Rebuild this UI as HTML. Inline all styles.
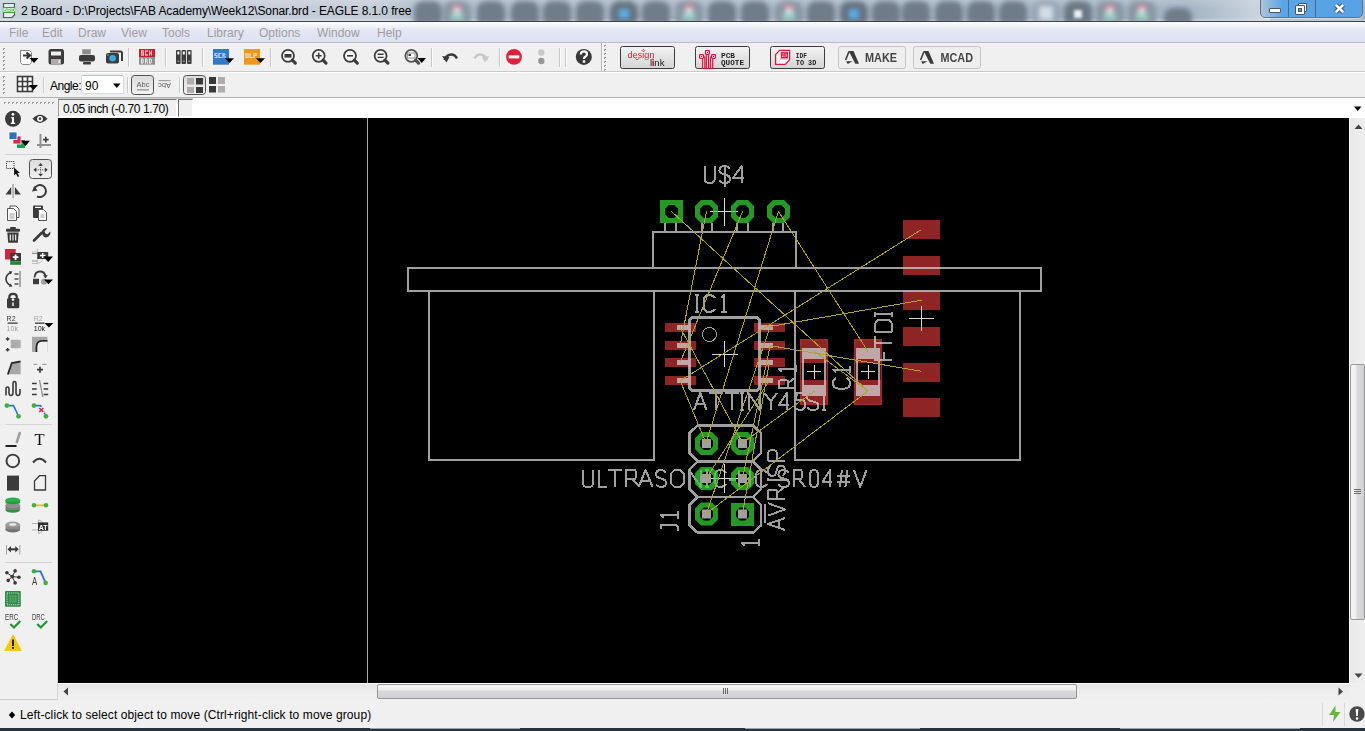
<!DOCTYPE html><html><head><meta charset="utf-8"><style>
*{box-sizing:border-box;margin:0;padding:0}
html,body{width:1365px;height:731px;overflow:hidden;background:#f0f0f0;font-family:"Liberation Sans",sans-serif;position:relative}
.a{position:absolute}
.t{position:absolute;white-space:nowrap;font-size:12px;line-height:14px}
svg{position:absolute}
</style></head><body><div class="a" style="left:0;top:0;width:1365px;height:21px;background:linear-gradient(90deg,#c9d2db 0,#c3ccd6 380px,#a9b8c7 430px,#a3b3c3 100%);overflow:hidden"><div class="a" style="left:0;top:0;width:1365px;height:21px;background:linear-gradient(rgba(255,255,255,.18),rgba(255,255,255,0) 40%,rgba(0,0,0,0) 85%,rgba(230,236,242,.5))"></div><div class="a" style="left:414px;top:1px;width:28px;height:24px;border-radius:9px 9px 3px 3px;background:#5a6673;filter:blur(2.6px);opacity:.72"></div><div class="a" style="left:443px;top:1px;width:28px;height:24px;border-radius:9px 9px 3px 3px;background:#7d8a96;filter:blur(2.6px);opacity:.72"></div><div class="a" style="left:452px;top:5px;width:10px;height:6px;background:#e890a0;filter:blur(2.5px);opacity:.8"></div><div class="a" style="left:451px;top:12px;width:12px;height:8px;background:#a0e0d0;filter:blur(2.5px);opacity:.8"></div><div class="a" style="left:454px;top:8px;width:6px;height:6px;background:#f0f4f8;filter:blur(2px);opacity:.7"></div><div class="a" style="left:477px;top:1px;width:28px;height:24px;border-radius:9px 9px 3px 3px;background:#5a6673;filter:blur(2.6px);opacity:.72"></div><div class="a" style="left:511px;top:1px;width:28px;height:24px;border-radius:9px 9px 3px 3px;background:#5a6673;filter:blur(2.6px);opacity:.72"></div><div class="a" style="left:543px;top:1px;width:28px;height:24px;border-radius:9px 9px 3px 3px;background:#5a6673;filter:blur(2.6px);opacity:.72"></div><div class="a" style="left:576px;top:1px;width:28px;height:24px;border-radius:9px 9px 3px 3px;background:#5a6673;filter:blur(2.6px);opacity:.72"></div><div class="a" style="left:610px;top:1px;width:28px;height:24px;border-radius:9px 9px 3px 3px;background:#4e5a66;filter:blur(2.6px);opacity:.72"></div><div class="a" style="left:619px;top:9px;width:10px;height:10px;background:#58b0ec;filter:blur(2.2px);opacity:.9"></div><div class="a" style="left:642px;top:1px;width:28px;height:24px;border-radius:9px 9px 3px 3px;background:#5a6673;filter:blur(2.6px);opacity:.72"></div><div class="a" style="left:675px;top:1px;width:28px;height:24px;border-radius:9px 9px 3px 3px;background:#7d8a96;filter:blur(2.6px);opacity:.72"></div><div class="a" style="left:684px;top:5px;width:10px;height:6px;background:#e890a0;filter:blur(2.5px);opacity:.8"></div><div class="a" style="left:683px;top:12px;width:12px;height:8px;background:#a0e0d0;filter:blur(2.5px);opacity:.8"></div><div class="a" style="left:686px;top:8px;width:6px;height:6px;background:#f0f4f8;filter:blur(2px);opacity:.7"></div><div class="a" style="left:708px;top:1px;width:28px;height:24px;border-radius:9px 9px 3px 3px;background:#5a6673;filter:blur(2.6px);opacity:.72"></div><div class="a" style="left:741px;top:1px;width:28px;height:24px;border-radius:9px 9px 3px 3px;background:#5a6673;filter:blur(2.6px);opacity:.72"></div><div class="a" style="left:775px;top:1px;width:28px;height:24px;border-radius:9px 9px 3px 3px;background:#7d8a96;filter:blur(2.6px);opacity:.72"></div><div class="a" style="left:784px;top:5px;width:10px;height:6px;background:#e890a0;filter:blur(2.5px);opacity:.8"></div><div class="a" style="left:783px;top:12px;width:12px;height:8px;background:#a0e0d0;filter:blur(2.5px);opacity:.8"></div><div class="a" style="left:786px;top:8px;width:6px;height:6px;background:#f0f4f8;filter:blur(2px);opacity:.7"></div><div class="a" style="left:807px;top:1px;width:28px;height:24px;border-radius:9px 9px 3px 3px;background:#5a6673;filter:blur(2.6px);opacity:.72"></div><div class="a" style="left:840px;top:1px;width:28px;height:24px;border-radius:9px 9px 3px 3px;background:#4e5a66;filter:blur(2.6px);opacity:.72"></div><div class="a" style="left:849px;top:9px;width:10px;height:10px;background:#58b0ec;filter:blur(2.2px);opacity:.9"></div><div class="a" style="left:872px;top:1px;width:28px;height:24px;border-radius:9px 9px 3px 3px;background:#5a6673;filter:blur(2.6px);opacity:.72"></div><div class="a" style="left:902px;top:1px;width:28px;height:24px;border-radius:9px 9px 3px 3px;background:#5a6673;filter:blur(2.6px);opacity:.72"></div><div class="a" style="left:935px;top:1px;width:28px;height:24px;border-radius:9px 9px 3px 3px;background:#5a6673;filter:blur(2.6px);opacity:.72"></div><div class="a" style="left:967px;top:1px;width:28px;height:24px;border-radius:9px 9px 3px 3px;background:#5a6673;filter:blur(2.6px);opacity:.72"></div><div class="a" style="left:999px;top:1px;width:28px;height:24px;border-radius:9px 9px 3px 3px;background:#5a6673;filter:blur(2.6px);opacity:.72"></div><div class="a" style="left:1032px;top:1px;width:28px;height:24px;border-radius:9px 9px 3px 3px;background:#8e9cab;filter:blur(2.6px);opacity:.72"></div><div class="a" style="left:1039px;top:6px;width:14px;height:14px;background:#e4ecf4;filter:blur(2.5px);opacity:.8"></div><div class="a" style="left:1064px;top:1px;width:28px;height:24px;border-radius:9px 9px 3px 3px;background:#56616c;filter:blur(2.6px);opacity:.72"></div><div class="a" style="left:1074px;top:10px;width:8px;height:8px;background:#e8eef4;filter:blur(1.5px)"></div><div class="a" style="left:1096px;top:1px;width:28px;height:24px;border-radius:9px 9px 3px 3px;background:#7d8a96;filter:blur(2.6px);opacity:.72"></div><div class="a" style="left:1105px;top:5px;width:10px;height:6px;background:#e890a0;filter:blur(2.5px);opacity:.8"></div><div class="a" style="left:1104px;top:12px;width:12px;height:8px;background:#a0e0d0;filter:blur(2.5px);opacity:.8"></div><div class="a" style="left:1107px;top:8px;width:6px;height:6px;background:#f0f4f8;filter:blur(2px);opacity:.7"></div><div class="a" style="left:1128px;top:1px;width:28px;height:24px;border-radius:9px 9px 3px 3px;background:#7d8a96;filter:blur(2.6px);opacity:.72"></div><div class="a" style="left:1137px;top:5px;width:10px;height:6px;background:#e890a0;filter:blur(2.5px);opacity:.8"></div><div class="a" style="left:1136px;top:12px;width:12px;height:8px;background:#a0e0d0;filter:blur(2.5px);opacity:.8"></div><div class="a" style="left:1139px;top:8px;width:6px;height:6px;background:#f0f4f8;filter:blur(2px);opacity:.7"></div><div class="a" style="left:1164px;top:8px;width:28px;height:24px;border-radius:9px 9px 3px 3px;background:#5a6673;filter:blur(2.6px);opacity:.72"></div><div class="a" style="left:1190px;top:0;width:80px;height:21px;background:linear-gradient(90deg,rgba(205,213,222,0),rgba(214,222,230,.9));"></div><div class="a" style="left:1260px;top:-3px;width:103px;height:21px;border:1px solid #5d7186;border-radius:0 0 5px 5px;background:linear-gradient(90deg,#aec4da 0,#5aa5e6 22px,#56a2e4 100%);box-shadow:0 1px 0 rgba(255,255,255,.5)"></div><div class="a" style="left:1288px;top:0;width:1px;height:17px;background:#4a6a8a"></div><div class="a" style="left:1315px;top:0;width:1px;height:17px;background:#4a6a8a"></div><div class="a" style="left:1269px;top:8px;width:12px;height:5px;background:#fafafa;border:1px solid #4a5560;border-radius:1px"></div><div class="a" style="left:1297.5px;top:2.5px;width:9.5px;height:9.5px;background:#fafafa;border:1px solid #4a5560;border-radius:1px"></div><div class="a" style="left:1295px;top:5px;width:9.5px;height:9.5px;background:#fafafa;border:1px solid #4a5560;border-radius:1px"></div><div class="a" style="left:1297.5px;top:7.5px;width:4px;height:4px;background:#4f9fe0;border:1px solid #4a5560"></div><svg style="left:1332px;top:2px" width="15" height="13"><path d="M3.8 2.8L11.2 10.2M11.2 2.8L3.8 10.2" stroke="#4a5560" stroke-width="4.6"/><path d="M3.8 2.8L11.2 10.2M11.2 2.8L3.8 10.2" stroke="#fafafa" stroke-width="2.6"/></svg><svg style="left:2px;top:2px" width="14" height="17"><path d="M1.5 1.5H12.5V13L10 15.5H1.5Z" fill="#e8ecef" stroke="#505860" stroke-width="1.2"/><rect x="1" y="5" width="12" height="6" fill="#3ca03c"/><text x="7" y="10" font-size="5.5" font-family="Liberation Sans" font-weight="bold" fill="#fff" text-anchor="middle">BRD</text></svg></div><div class="a" style="left:0;top:21px;width:1365px;height:1px;background:#3c4248"></div><div id="t_title" class="t" style="left:21px;top:4px;font-size:12px;line-height:14px;color:#000;letter-spacing:-0.1px">2 Board - D:\Projects\FAB Academy\Week12\Sonar.brd - EAGLE 8.1.0 free</div><div class="a" style="left:0;top:22px;width:1365px;height:21px;background:linear-gradient(#fdfdfe 0,#f3f5fa 3px,#e4e8f3 8px,#dde2f0 100%);border-bottom:1px solid #b8bfcc"></div><div id="t_mFile" class="t" style="left:9px;top:26px;font-size:12px;line-height:14px;color:#a29c9f;">File</div><div id="t_mEdit" class="t" style="left:42px;top:26px;font-size:12px;line-height:14px;color:#a29c9f;">Edit</div><div id="t_mDraw" class="t" style="left:78px;top:26px;font-size:12px;line-height:14px;color:#a29c9f;">Draw</div><div id="t_mView" class="t" style="left:121px;top:26px;font-size:12px;line-height:14px;color:#a29c9f;">View</div><div id="t_mTools" class="t" style="left:162px;top:26px;font-size:12px;line-height:14px;color:#a29c9f;">Tools</div><div id="t_mLibrary" class="t" style="left:207px;top:26px;font-size:12px;line-height:14px;color:#a29c9f;">Library</div><div id="t_mOptions" class="t" style="left:259px;top:26px;font-size:12px;line-height:14px;color:#a29c9f;">Options</div><div id="t_mWindow" class="t" style="left:317px;top:26px;font-size:12px;line-height:14px;color:#a29c9f;">Window</div><div id="t_mHelp" class="t" style="left:377px;top:26px;font-size:12px;line-height:14px;color:#a29c9f;">Help</div><div class="a" style="left:0;top:43px;width:1365px;height:28px;background:#f0f0f0"></div><div class="a" style="left:0;top:71px;width:1365px;height:1px;background:#c9c9c9"></div><div class="a" style="left:0;top:72px;width:1365px;height:1px;background:#fff"></div><div class="a" style="left:0;top:73px;width:1365px;height:24px;background:#f0f0f0"></div><div class="a" style="left:0;top:97px;width:1365px;height:1px;background:#b4b4b4"></div><div id="t_angle" class="t" style="left:50px;top:79px;font-size:12px;line-height:14px;color:#000;letter-spacing:-0.5px">Angle:</div><div class="a" style="left:81px;top:75px;width:43px;height:19px;background:#fff;border:1px solid #d4d8e0;border-top-color:#b8bcc4;border-radius:2px"></div><div id="t_ninety" class="t" style="left:85px;top:79px;font-size:12px;line-height:14px;color:#000;">90</div><svg style="left:112px;top:83px" width="10" height="6"><path d="M1 0.5H8.5L4.75 5Z" fill="#000"/></svg><div class="a" style="left:58px;top:98px;width:1307px;height:20px;background:#fff"></div><div class="a" style="left:58px;top:99px;width:119px;height:18px;background:#f0f0f0;border-top:1px solid #7a7a7a;border-left:1px solid #9a9a9a;border-right:1px solid #fff;border-bottom:1px solid #fff"></div><div class="a" style="left:178px;top:99px;width:15px;height:18px;background:#f0f0f0;border-top:1px solid #7a7a7a;border-left:1px solid #6a6a6a;border-right:1px solid #fff;border-bottom:1px solid #fff"></div><div class="a" style="left:58px;top:98px;width:135px;height:1px;background:#c8c8c8"></div><div id="t_coord" class="t" style="left:63px;top:102px;font-size:12px;line-height:14px;color:#000;letter-spacing:-0.4px">0.05 inch (-0.70 1.70)</div><svg style="left:1353px;top:106px" width="10" height="6"><path d="M1 0.5H8.5L4.75 5Z" fill="#000"/></svg><div class="a" style="left:0;top:98px;width:57px;height:601px;background:#f0f0f0"></div><div class="a" style="left:57px;top:118px;width:1px;height:582px;background:#d4d4d4"></div><div class="a" style="left:0;top:699px;width:58px;height:1px;background:#cfcfcf"></div><div class="a" style="left:5px;top:154px;width:47px;height:1px;background:#d4d4d4"></div><div class="a" style="left:5px;top:424px;width:47px;height:1px;background:#d4d4d4"></div><div class="a" style="left:5px;top:562px;width:47px;height:1px;background:#d4d4d4"></div><div class="a" style="left:58px;top:118px;width:1291px;height:565px;background:#000"></div><svg width="1365" height="731" style="left:0;top:0"><defs><clipPath id="cv"><rect x="58" y="118" width="1292" height="565"/></clipPath></defs><g clip-path="url(#cv)"><g fill="#8e2424"><rect x="903" y="220" width="37" height="19"/><rect x="903" y="256" width="37" height="19"/><rect x="903" y="291" width="37" height="19"/><rect x="903" y="327" width="37" height="19"/><rect x="903" y="363" width="37" height="19"/><rect x="903" y="398" width="37" height="19"/><rect x="665" y="323" width="31" height="9"/><rect x="754" y="323" width="31" height="9"/><rect x="665" y="341" width="31" height="9"/><rect x="754" y="341" width="31" height="9"/><rect x="665" y="358" width="31" height="9"/><rect x="754" y="358" width="31" height="9"/><rect x="665" y="376" width="31" height="9"/><rect x="754" y="376" width="31" height="9"/><rect x="800" y="339" width="28" height="24"/><rect x="800" y="380" width="28" height="25"/><rect x="800.75" y="339.75" width="26.5" height="64.5" fill="none" stroke="#a82828" stroke-width="1.5"/><rect x="854" y="339" width="28" height="24"/><rect x="854" y="380" width="28" height="25"/><rect x="854.75" y="339.75" width="26.5" height="64.5" fill="none" stroke="#a82828" stroke-width="1.5"/></g><g fill="#cecece" stroke="#cecece" opacity="0.775" shape-rendering="crispEdges"><path fill="none" stroke-width="2" d="M408 268H1041V291H408Z M429 291V460H654V291 M795 291V460H1020V291 M653 268V232H796V268"/><path fill="none" stroke-width="2" d="M665 223V231M676 223V231M701.5 223V231M712 223V231M737 223V231M747.5 223V231M772.5 223V231M783 223V231"/><rect x="689.5" y="317.5" width="70" height="73" rx="4" fill="none" stroke-width="3"/><rect x="677" y="325" width="14" height="5" stroke="none"/><rect x="758" y="325" width="15" height="5" stroke="none"/><rect x="677" y="343" width="14" height="5" stroke="none"/><rect x="758" y="343" width="15" height="5" stroke="none"/><rect x="677" y="360" width="14" height="5" stroke="none"/><rect x="758" y="360" width="15" height="5" stroke="none"/><rect x="677" y="378" width="14" height="5" stroke="none"/><rect x="758" y="378" width="15" height="5" stroke="none"/><path stroke="none" fill-rule="evenodd" d="M802 348H826V396H802Z M804 359H824V385H804Z"/><path stroke="none" fill-rule="evenodd" d="M856 348H880V396H856Z M858 359H878V385H858Z"/><path fill="none" stroke-width="2.5" d="M697.5 425.7H753L760.8 432.7V453L753 461.3L760.8 469.5V489L753 497L760.8 505V525.5L753 532.7H697.5L689.7 525.5V505L697.5 497L689.7 489V469.5L697.5 461.3L689.7 453V432.7Z M697.5 461.3H753 M697.5 497H753"/><circle cx="709.5" cy="334.5" r="7" fill="none" stroke-width="1"/><g fill="none" stroke-width="2" stroke-linejoin="round"><path transform="translate(704.8 166)" d="M0 0V12.5Q0 17 4.5 17H5.5Q10 17 10 12.5V0"/><path transform="translate(719.5 166)" d="M10.5 2.5Q8.4 0 5.25 0Q0 0 0 4.5Q0 7.5 5.25 8.5Q10.5 9.5 10.5 13Q10.5 17 5.25 17Q1.575 17 0 14.5M5.25 -1.5V21"/><path transform="translate(733 166)" d="M8.56 17V0L0 12H10.7"/><path transform="translate(695 295)" d="M0 0H4M2.0 0V17M0 17H4"/><path transform="translate(703.6 295)" d="M11.4 3Q9.120000000000001 0 5.7 0Q0 0 0 6V11Q0 17 5.7 17Q9.120000000000001 17 11.4 14"/><path transform="translate(721 295)" d="M0.0 3L3.0 0V17M0 17H6"/><path transform="translate(694 393)" d="M0 17L6.25 0L12.5 17M2.25 11H10.25"/><path transform="translate(708.5 393)" d="M0 0H14.5M7.25 0V17"/><path transform="translate(725 393)" d="M0 0H14M7.0 0V17"/><path transform="translate(739.8 393)" d="M0 0H4M2.0 0V17M0 17H4"/><path transform="translate(748.6 393)" d="M0 17V0L11 17V0"/><path transform="translate(764.6 393)" d="M0 0L6.2 8.5L12.4 0M6.2 8.5V17"/><path transform="translate(778.9 393)" d="M8.0 17V0L0 12H10"/><path transform="translate(796 393)" d="M9 0H0.9L0 7.5Q1.8 6.5 4.5 6.5Q9 6.5 9 11.5Q9 17 4.5 17Q0.9 17 0 15"/><path transform="translate(807 393)" d="M11.6 2.5Q9.28 0 5.8 0Q0 0 0 4.5Q0 7.5 5.8 8.5Q11.6 9.5 11.6 13Q11.6 17 5.8 17Q1.74 17 0 14.5"/><path transform="translate(821.7 393)" d="M0 0H4M2.0 0V17M0 17H4"/><path transform="translate(583 470)" d="M0 0V12.5Q0 17 4.5 17H5.5Q10 17 10 12.5V0"/><path transform="translate(598.5 470)" d="M0 0V17H8.5"/><path transform="translate(608 470)" d="M0 0H14M7.0 0V17"/><path transform="translate(625.5 470)" d="M0 17V0H8.99Q10.44 0 10.44 4.5Q10.44 9 8.99 9H0M6.525 9L14.5 17"/><path transform="translate(638.6 470)" d="M0 17L7.0 0L14 17M2.52 11H11.479999999999999"/><path transform="translate(656 470)" d="M10 2.5Q8.0 0 5.0 0Q0 0 0 4.5Q0 7.5 5.0 8.5Q10 9.5 10 13Q10 17 5.0 17Q1.5 17 0 14.5"/><path transform="translate(670.5 470)" d="M4 0H9.5L13.5 4V13L9.5 17H4L0 13V4Z"/><path transform="translate(689 470)" d="M0 17V0L12 17V0"/><path transform="translate(704.5 470)" d="M0 0H4M2.0 0V17M0 17H4"/><path transform="translate(715 470)" d="M11 3Q8.8 0 5.5 0Q0 0 0 6V11Q0 17 5.5 17Q8.8 17 11 14"/><path transform="translate(729 470)" d="M0 10H7"/><path transform="translate(739 470)" d="M0 0V17M11 0V17M0 8.5H11"/><path transform="translate(756 470)" d="M11 3Q8.8 0 5.5 0Q0 0 0 6V11Q0 17 5.5 17Q8.8 17 11 14"/><path transform="translate(769 470)" d="M0 10H7"/><path transform="translate(778.4 470)" d="M10.6 2.5Q8.48 0 5.3 0Q0 0 0 4.5Q0 7.5 5.3 8.5Q10.6 9.5 10.6 13Q10.6 17 5.3 17Q1.5899999999999999 17 0 14.5"/><path transform="translate(793.8 470)" d="M0 17V0H6.944Q8.064 0 8.064 4.5Q8.064 9 6.944 9H0M5.04 9L11.2 17"/><path transform="translate(810 470)" d="M4.0 0Q8 0 8 5V12Q8 17 4.0 17Q0 17 0 12V5Q0 0 4.0 0Z"/><path transform="translate(822.4 470)" d="M7.68 17V0L0 12H9.6"/><path transform="translate(837 470)" d="M4.826 0L2.794 17M10.413999999999998 0L8.382 17M0 5.5H12.7M0 11.5H12.7"/><path transform="translate(854 470)" d="M0 0L6.25 17L12.5 0"/><path transform="translate(779 388) rotate(-90)" d="M0 17V0H6.82Q7.92 0 7.92 4.5Q7.92 9 6.82 9H0M4.95 9L11 17"/><path transform="translate(779 372.4) rotate(-90)" d="M0.5 3L3.5 0V17M0 17H7"/><path transform="translate(833 388.6) rotate(-90)" d="M11 3Q8.8 0 5.5 0Q0 0 0 6V11Q0 17 5.5 17Q8.8 17 11 14"/><path transform="translate(833 373) rotate(-90)" d="M0.5 3L3.5 0V17M0 17H7"/><path transform="translate(875 359.8) rotate(-90)" d="M11 0H0V17M0 8.5H7.699999999999999"/><path transform="translate(875 349.8) rotate(-90)" d="M0 0H14M7.0 0V17"/><path transform="translate(875 331.6) rotate(-90)" d="M0 0V17H5.4Q12 17 12 11V6Q12 0 5.4 0Z"/><path transform="translate(875 316.7) rotate(-90)" d="M0 0H5M2.5 0V17M0 17H5"/><path transform="translate(768 530) rotate(-90)" d="M0 17L6.0 0L12 17M2.16 11H9.84"/><path transform="translate(768 515.6) rotate(-90)" d="M0 0L6.2 17L12.4 0"/><path transform="translate(768 498.8) rotate(-90)" d="M0 17V0H7.75Q9.0 0 9.0 4.5Q9.0 9 7.75 9H0M5.625 9L12.5 17"/><path transform="translate(768 481.4) rotate(-90)" d="M0 0H3M1.5 0V17M0 17H3"/><path transform="translate(768 476) rotate(-90)" d="M10.4 2.5Q8.32 0 5.2 0Q0 0 0 4.5Q0 7.5 5.2 8.5Q10.4 9.5 10.4 13Q10.4 17 5.2 17Q1.56 17 0 14.5"/><path transform="translate(768 460.5) rotate(-90)" d="M0 17V0H6.3Q10.5 0 10.5 4.5Q10.5 9 6.3 9H0"/><path transform="translate(661 531.5) rotate(-90)" d="M2.5 0H7V15L4.5 17H0.5"/><path transform="translate(661 519) rotate(-90)" d="M1.0 3L4.0 0V17M0 17H8"/><path transform="translate(741.6 546) rotate(-90)" d="M0.5 3L3.5 0V17M0 17H7"/></g><path d="M764.5 504V523" fill="none" stroke-width="2"/></g><rect x="367" y="118" width="1" height="565" fill="#a8a8a8"/><path d="M710 211.5H738M724 197.5V225.5M711.5 354H737.5M724.5 341V367M807 371.5H821M814 364.5V378.5M861 371.5H875M868 364.5V378.5M909.0 318.5H934.0M921.5 306.0V331.0M709.5 478.5H738.5M724 464.0V493.0" stroke="#d8d8d8" stroke-width="1" fill="none" shape-rendering="crispEdges"/><g fill="#32d432" opacity="0.725"><path fill-rule="evenodd" d="M660 200H683V223H660Z M668.8 205.0L674.2 205.0L678.0 208.8L678.0 214.2L674.2 218.0L668.8 218.0L665.0 214.2L665.0 208.8Z"/><path fill-rule="evenodd" d="M701.0 200.0L712.0 200.0L718.0 206.0L718.0 217.0L712.0 223.0L701.0 223.0L695.0 217.0L695.0 206.0Z M703.8 205.0L709.2 205.0L713.0 208.8L713.0 214.2L709.2 218.0L703.8 218.0L700.0 214.2L700.0 208.8Z"/><path fill-rule="evenodd" d="M737.0 200.0L748.0 200.0L754.0 206.0L754.0 217.0L748.0 223.0L737.0 223.0L731.0 217.0L731.0 206.0Z M739.8 205.0L745.2 205.0L749.0 208.8L749.0 214.2L745.2 218.0L739.8 218.0L736.0 214.2L736.0 208.8Z"/><path fill-rule="evenodd" d="M773.0 200.0L784.0 200.0L790.0 206.0L790.0 217.0L784.0 223.0L773.0 223.0L767.0 217.0L767.0 206.0Z M775.8 205.0L781.2 205.0L785.0 208.8L785.0 214.2L781.2 218.0L775.8 218.0L772.0 214.2L772.0 208.8Z"/><path fill-rule="evenodd" d="M701.0 432.0L712.0 432.0L718.0 438.0L718.0 449.0L712.0 455.0L701.0 455.0L695.0 449.0L695.0 438.0Z M703.8 437.0L709.2 437.0L713.0 440.8L713.0 446.2L709.2 450.0L703.8 450.0L700.0 446.2L700.0 440.8Z"/><path fill-rule="evenodd" d="M737.0 432.0L748.0 432.0L754.0 438.0L754.0 449.0L748.0 455.0L737.0 455.0L731.0 449.0L731.0 438.0Z M739.8 437.0L745.2 437.0L749.0 440.8L749.0 446.2L745.2 450.0L739.8 450.0L736.0 446.2L736.0 440.8Z"/><path fill-rule="evenodd" d="M701.0 467.0L712.0 467.0L718.0 473.0L718.0 484.0L712.0 490.0L701.0 490.0L695.0 484.0L695.0 473.0Z M703.8 472.0L709.2 472.0L713.0 475.8L713.0 481.2L709.2 485.0L703.8 485.0L700.0 481.2L700.0 475.8Z"/><path fill-rule="evenodd" d="M737.0 467.0L748.0 467.0L754.0 473.0L754.0 484.0L748.0 490.0L737.0 490.0L731.0 484.0L731.0 473.0Z M739.8 472.0L745.2 472.0L749.0 475.8L749.0 481.2L745.2 485.0L739.8 485.0L736.0 481.2L736.0 475.8Z"/><path fill-rule="evenodd" d="M701.0 502.5L712.0 502.5L718.0 508.5L718.0 519.5L712.0 525.5L701.0 525.5L695.0 519.5L695.0 508.5Z M703.8 507.5L709.2 507.5L713.0 511.3L713.0 516.7L709.2 520.5L703.8 520.5L700.0 516.7L700.0 511.3Z"/><path fill-rule="evenodd" d="M731 503H754V526H731Z M739.8 507.5L745.2 507.5L749.0 511.3L749.0 516.7L745.2 520.5L739.8 520.5L736.0 516.7L736.0 511.3Z"/></g><g fill="#a0a0a0"><rect x="702.0" y="439.0" width="9" height="9"/><rect x="738.0" y="439.0" width="9" height="9"/><rect x="702.0" y="474.0" width="9" height="9"/><rect x="738.0" y="474.0" width="9" height="9"/><rect x="702.0" y="509.5" width="9" height="9"/><rect x="738.0" y="509.5" width="9" height="9"/></g><path d="M671.5 211.5L868 391M706.5 211.5L680.2 345M742.5 211.5L680.2 362.3M778.5 211.5L868 351.5M778.5 211.5L706 443M680.2 380.7L921.5 229.5M680.2 327.5L742.5 443M680.2 380.7L706 443M921.5 300.2L770.2 326.5M921.5 371.3L770.2 345.6M814.5 351.4L868 391M814.5 391L742.5 443M868 391L706.5 513.5M770.2 326.5L706.5 513.5M769.2 380.7L706.5 478M770.2 345.6L742.5 478M769.2 363.2L742.5 513.5" stroke="#aca42c" stroke-width="1" fill="none" shape-rendering="crispEdges"/></g></svg><div class="a" style="left:58px;top:683px;width:1291px;height:16px;background:#fff"></div><div class="a" style="left:58px;top:684px;width:1291px;height:15px;background:linear-gradient(#e6e6e6,#ececec 40%,#efefef)"></div><div class="a" style="left:377px;top:684px;width:700px;height:15px;border:1px solid #979797;border-radius:2px;background:linear-gradient(#f6f6f6 0,#ececec 40%,#d9d9dc 45%,#d2d2d6 100%)"></div><svg style="left:722px;top:687px" width="8" height="8"><path d="M1.5 1V7M3.5 1V7M5.5 1V7" stroke="#6a6a6a" stroke-width="1"/></svg><svg style="left:63px;top:687px" width="6" height="9"><path d="M5 0.5V8.5L0.5 4.5Z" fill="#444"/></svg><svg style="left:1338px;top:687px" width="6" height="9"><path d="M0.5 0.5V8.5L5 4.5Z" fill="#444"/></svg><div class="a" style="left:1349px;top:118px;width:16px;height:565px;background:#fff"></div><div class="a" style="left:1350px;top:118px;width:15px;height:565px;background:linear-gradient(90deg,#e6e6e6,#ececec 40%,#efefef)"></div><div class="a" style="left:1350px;top:364px;width:15px;height:256px;border:1px solid #979797;border-radius:2px;background:linear-gradient(90deg,#f6f6f6 0,#ececec 40%,#d9d9dc 45%,#d2d2d6 100%)"></div><svg style="left:1353px;top:488px" width="9" height="8"><path d="M1 1.5H8M1 3.5H8M1 5.5H8" stroke="#6a6a6a" stroke-width="1"/></svg><svg style="left:1354px;top:124px" width="9" height="6"><path d="M0.5 5H8.5L4.5 0.5Z" fill="#444"/></svg><svg style="left:1354px;top:673px" width="9" height="6"><path d="M0.5 0.5H8.5L4.5 5Z" fill="#444"/></svg><div class="a" style="left:0;top:700px;width:1365px;height:28px;background:#f0f0f0"></div><svg style="left:8px;top:711px" width="8" height="8"><path d="M4 0.5L7.2 4L4 7.5L0.8 4Z" fill="#000"/></svg><div id="t_status" class="t" style="left:20px;top:708px;font-size:12px;line-height:14px;color:#000;letter-spacing:0.1px">Left-click to select object to move (Ctrl+right-click to move group)</div><div class="a" style="left:1322px;top:703px;width:1px;height:23px;background:#d8d8d8"></div><div class="a" style="left:1344px;top:703px;width:1px;height:23px;background:#d8d8d8"></div><svg style="left:1328px;top:705px" width="14" height="18"><path d="M7.5 0.5L1 10H6L5 17L12.5 7H7.5Z" fill="#6cb43c"/></svg><svg style="left:1349px;top:706px" width="16" height="17"><circle cx="8" cy="8" r="7.7" fill="#4a4a4a"/><path d="M6.7 3H9.3L8.8 10H7.2Z" fill="#fff"/><circle cx="8" cy="12.5" r="1.3" fill="#fff"/></svg><div class="a" style="left:0;top:728px;width:1365px;height:3px;background:#28323c"></div><div class="a" style="left:370px;top:728px;width:150px;height:1px;background:#9aa4ae"></div><div class="a" style="left:745px;top:728px;width:175px;height:1px;background:#9aa4ae"></div><div class="a" style="left:1120px;top:728px;width:180px;height:1px;background:#9aa4ae"></div><svg style="left:0;top:0;pointer-events:none" width="1365" height="731"><defs><linearGradient id="btng" x1="0" y1="0" x2="0" y2="1"><stop offset="0" stop-color="#f4f4f4"/><stop offset="1" stop-color="#d4d4d4"/></linearGradient><linearGradient id="btng2" x1="0" y1="0" x2="0" y2="1"><stop offset="0" stop-color="#dcdcdc"/><stop offset="1" stop-color="#f2f2f2"/></linearGradient></defs><rect x="3" y="48" width="2" height="2" fill="#a0a0a0"/><rect x="4" y="49" width="1" height="1" fill="#fff"/><rect x="3" y="52" width="2" height="2" fill="#a0a0a0"/><rect x="4" y="53" width="1" height="1" fill="#fff"/><rect x="3" y="56" width="2" height="2" fill="#a0a0a0"/><rect x="4" y="57" width="1" height="1" fill="#fff"/><rect x="3" y="60" width="2" height="2" fill="#a0a0a0"/><rect x="4" y="61" width="1" height="1" fill="#fff"/><rect x="3" y="64" width="2" height="2" fill="#a0a0a0"/><rect x="4" y="65" width="1" height="1" fill="#fff"/><rect x="3" y="68" width="2" height="2" fill="#a0a0a0"/><rect x="4" y="69" width="1" height="1" fill="#fff"/><path d="M20.5 50.5H29.5L31.5 52.5V62.5L29.5 64.5H22.5L20.5 62.5Z" fill="#fafafa" stroke="#858585" stroke-width="1"/><path d="M23 55.5H28.5M26.5 52.5L30 55.5L26.5 58.5" fill="none" stroke="#3a3a3a" stroke-width="2.2"/><path d="M29.5 58H38.5L34.0 63Z" fill="#000"/><rect x="48.5" y="49" width="15.5" height="15.5" rx="2.5" fill="#3c3c3c"/><rect x="51" y="51.5" width="10" height="4" fill="#f0f0f0"/><rect x="51" y="59" width="10" height="5.5" fill="#b0acab"/><rect x="58.5" y="60" width="1.5" height="3" fill="#f0f0f0"/><rect x="82" y="49" width="9" height="5.5" fill="#a8a8a8"/><rect x="83" y="50.5" width="7" height="1" fill="#707070"/><rect x="83" y="52.5" width="7" height="1" fill="#707070"/><rect x="79" y="55" width="16" height="6.5" rx="2" fill="#3c3c3c"/><rect x="83" y="62" width="8" height="2.5" rx="1" fill="#3c3c3c"/><path d="M110 51.5H120.5Q122 51.5 122 53V61" fill="none" stroke="#3c3c3c" stroke-width="2"/><rect x="106" y="53" width="13" height="10.5" rx="2" fill="#3c3c3c"/><circle cx="112.6" cy="58.2" r="3.3" fill="#3aa6e4"/><rect x="107.5" y="54.5" width="1" height="1" fill="#fff"/><rect x="128" y="48" width="1" height="19" fill="#c8c8c8"/><rect x="129" y="48" width="1" height="19" fill="#fafafa"/><rect x="139" y="49" width="16" height="8" fill="#c8202c"/><rect x="139" y="57" width="16" height="7.7" fill="#909090"/><g fill="#fff"><rect x="141" y="50.5" width="1" height="1"/><rect x="142" y="50.5" width="1" height="1"/><rect x="143" y="50.5" width="1" height="1"/><rect x="141" y="51.5" width="1" height="1"/><rect x="141" y="52.5" width="1" height="1"/><rect x="142" y="52.5" width="1" height="1"/><rect x="143" y="52.5" width="1" height="1"/><rect x="143" y="53.5" width="1" height="1"/><rect x="141" y="54.5" width="1" height="1"/><rect x="142" y="54.5" width="1" height="1"/><rect x="143" y="54.5" width="1" height="1"/><rect x="145" y="50.5" width="1" height="1"/><rect x="146" y="50.5" width="1" height="1"/><rect x="147" y="50.5" width="1" height="1"/><rect x="145" y="51.5" width="1" height="1"/><rect x="145" y="52.5" width="1" height="1"/><rect x="145" y="53.5" width="1" height="1"/><rect x="145" y="54.5" width="1" height="1"/><rect x="146" y="54.5" width="1" height="1"/><rect x="147" y="54.5" width="1" height="1"/><rect x="149" y="50.5" width="1" height="1"/><rect x="151" y="50.5" width="1" height="1"/><rect x="149" y="51.5" width="1" height="1"/><rect x="151" y="51.5" width="1" height="1"/><rect x="149" y="52.5" width="1" height="1"/><rect x="150" y="52.5" width="1" height="1"/><rect x="151" y="52.5" width="1" height="1"/><rect x="149" y="53.5" width="1" height="1"/><rect x="151" y="53.5" width="1" height="1"/><rect x="149" y="54.5" width="1" height="1"/><rect x="151" y="54.5" width="1" height="1"/></g><g fill="#fff"><rect x="141" y="58.5" width="1" height="1"/><rect x="142" y="58.5" width="1" height="1"/><rect x="141" y="59.5" width="1" height="1"/><rect x="143" y="59.5" width="1" height="1"/><rect x="141" y="60.5" width="1" height="1"/><rect x="142" y="60.5" width="1" height="1"/><rect x="141" y="61.5" width="1" height="1"/><rect x="143" y="61.5" width="1" height="1"/><rect x="141" y="62.5" width="1" height="1"/><rect x="142" y="62.5" width="1" height="1"/><rect x="145" y="58.5" width="1" height="1"/><rect x="146" y="58.5" width="1" height="1"/><rect x="145" y="59.5" width="1" height="1"/><rect x="147" y="59.5" width="1" height="1"/><rect x="145" y="60.5" width="1" height="1"/><rect x="146" y="60.5" width="1" height="1"/><rect x="145" y="61.5" width="1" height="1"/><rect x="147" y="61.5" width="1" height="1"/><rect x="145" y="62.5" width="1" height="1"/><rect x="147" y="62.5" width="1" height="1"/><rect x="149" y="58.5" width="1" height="1"/><rect x="150" y="58.5" width="1" height="1"/><rect x="149" y="59.5" width="1" height="1"/><rect x="151" y="59.5" width="1" height="1"/><rect x="149" y="60.5" width="1" height="1"/><rect x="151" y="60.5" width="1" height="1"/><rect x="149" y="61.5" width="1" height="1"/><rect x="151" y="61.5" width="1" height="1"/><rect x="149" y="62.5" width="1" height="1"/><rect x="150" y="62.5" width="1" height="1"/></g><rect x="165" y="48" width="1" height="19" fill="#c8c8c8"/><rect x="166" y="48" width="1" height="19" fill="#fafafa"/><rect x="176" y="50" width="4.6" height="14" rx="1" fill="#3c3c3c"/><rect x="177.3" y="51.5" width="2" height="3" fill="#fff"/><rect x="177.3" y="60.5" width="2" height="1.5" fill="#888"/><rect x="181.5" y="50" width="4.6" height="14" rx="1" fill="#3c3c3c"/><rect x="182.8" y="51.5" width="2" height="3" fill="#fff"/><rect x="182.8" y="60.5" width="2" height="1.5" fill="#888"/><rect x="187" y="50" width="4.6" height="14" rx="1" fill="#3c3c3c"/><rect x="188.3" y="51.5" width="2" height="3" fill="#fff"/><rect x="188.3" y="60.5" width="2" height="1.5" fill="#888"/><rect x="202" y="48" width="1" height="19" fill="#c8c8c8"/><rect x="203" y="48" width="1" height="19" fill="#fafafa"/><rect x="213" y="49" width="16" height="15.7" fill="#2f7bc8"/><g fill="#e8f0ff"><rect x="214.5" y="53" width="1" height="1"/><rect x="215.5" y="53" width="1" height="1"/><rect x="216.5" y="53" width="1" height="1"/><rect x="214.5" y="54" width="1" height="1"/><rect x="214.5" y="55" width="1" height="1"/><rect x="215.5" y="55" width="1" height="1"/><rect x="216.5" y="55" width="1" height="1"/><rect x="216.5" y="56" width="1" height="1"/><rect x="214.5" y="57" width="1" height="1"/><rect x="215.5" y="57" width="1" height="1"/><rect x="216.5" y="57" width="1" height="1"/><rect x="218.5" y="53" width="1" height="1"/><rect x="219.5" y="53" width="1" height="1"/><rect x="220.5" y="53" width="1" height="1"/><rect x="218.5" y="54" width="1" height="1"/><rect x="218.5" y="55" width="1" height="1"/><rect x="218.5" y="56" width="1" height="1"/><rect x="218.5" y="57" width="1" height="1"/><rect x="219.5" y="57" width="1" height="1"/><rect x="220.5" y="57" width="1" height="1"/><rect x="222.5" y="53" width="1" height="1"/><rect x="223.5" y="53" width="1" height="1"/><rect x="222.5" y="54" width="1" height="1"/><rect x="224.5" y="54" width="1" height="1"/><rect x="222.5" y="55" width="1" height="1"/><rect x="223.5" y="55" width="1" height="1"/><rect x="222.5" y="56" width="1" height="1"/><rect x="224.5" y="56" width="1" height="1"/><rect x="222.5" y="57" width="1" height="1"/><rect x="224.5" y="57" width="1" height="1"/></g><path d="M225 58.3H234L229.5 63.0Z" fill="#000"/><rect x="244" y="49" width="16" height="15.7" fill="#f0961e"/><g fill="#fff4e0"><rect x="245.5" y="53" width="1" height="1"/><rect x="247.5" y="53" width="1" height="1"/><rect x="245.5" y="54" width="1" height="1"/><rect x="247.5" y="54" width="1" height="1"/><rect x="245.5" y="55" width="1" height="1"/><rect x="247.5" y="55" width="1" height="1"/><rect x="245.5" y="56" width="1" height="1"/><rect x="247.5" y="56" width="1" height="1"/><rect x="245.5" y="57" width="1" height="1"/><rect x="246.5" y="57" width="1" height="1"/><rect x="247.5" y="57" width="1" height="1"/><rect x="249.5" y="53" width="1" height="1"/><rect x="249.5" y="54" width="1" height="1"/><rect x="249.5" y="55" width="1" height="1"/><rect x="249.5" y="56" width="1" height="1"/><rect x="249.5" y="57" width="1" height="1"/><rect x="250.5" y="57" width="1" height="1"/><rect x="251.5" y="57" width="1" height="1"/><rect x="253.5" y="53" width="1" height="1"/><rect x="254.5" y="53" width="1" height="1"/><rect x="255.5" y="53" width="1" height="1"/><rect x="253.5" y="54" width="1" height="1"/><rect x="255.5" y="54" width="1" height="1"/><rect x="253.5" y="55" width="1" height="1"/><rect x="254.5" y="55" width="1" height="1"/><rect x="255.5" y="55" width="1" height="1"/><rect x="253.5" y="56" width="1" height="1"/><rect x="253.5" y="57" width="1" height="1"/></g><path d="M256 58.3H265L260.5 63.0Z" fill="#000"/><rect x="270" y="48" width="1" height="19" fill="#c8c8c8"/><rect x="271" y="48" width="1" height="19" fill="#fafafa"/><circle cx="288" cy="55.8" r="6" fill="#f4f4f4" stroke="#3c3c3c" stroke-width="1.8"/><path d="M292.3 60.099999999999994L295.3 63.099999999999994" stroke="#3c3c3c" stroke-width="3.2" stroke-linecap="round"/><rect x="284.5" y="54" width="7" height="3.6" fill="#3c3c3c"/><circle cx="318.7" cy="55.8" r="6" fill="#f4f4f4" stroke="#3c3c3c" stroke-width="1.8"/><path d="M323.0 60.099999999999994L326.0 63.099999999999994" stroke="#3c3c3c" stroke-width="3.2" stroke-linecap="round"/><path d="M315.7 55.8H321.7M318.7 52.8V58.8" stroke="#3c3c3c" stroke-width="1.6"/><circle cx="350" cy="55.8" r="6" fill="#f4f4f4" stroke="#3c3c3c" stroke-width="1.8"/><path d="M354.3 60.099999999999994L357.3 63.099999999999994" stroke="#3c3c3c" stroke-width="3.2" stroke-linecap="round"/><path d="M347 55.8H353" stroke="#3c3c3c" stroke-width="1.6"/><circle cx="380.6" cy="55.8" r="6" fill="#f4f4f4" stroke="#3c3c3c" stroke-width="1.8"/><path d="M384.90000000000003 60.099999999999994L387.90000000000003 63.099999999999994" stroke="#3c3c3c" stroke-width="3.2" stroke-linecap="round"/><path d="M377.6 54.2H383.6M377.6 57.4H383.6" stroke="#3c3c3c" stroke-width="1.4"/><circle cx="411.3" cy="55.8" r="6" fill="#f4f4f4" stroke="#505050" stroke-width="1.8"/><path d="M415.6 60.099999999999994L418.6 63.099999999999994" stroke="#505050" stroke-width="3.2" stroke-linecap="round"/><rect x="407.5" y="53" width="7.5" height="5" fill="#fff" stroke="#909090" stroke-width="1"/><rect x="408.5" y="54" width="2.5" height="2" fill="#3c3c3c"/><path d="M417.5 58H426.0L421.75 63Z" fill="#000"/><rect x="431" y="48" width="1" height="19" fill="#c8c8c8"/><rect x="432" y="48" width="1" height="19" fill="#fafafa"/><path d="M444.5 60Q447 54 452 54.5Q455.5 55 457 58.5" fill="none" stroke="#3a3a3a" stroke-width="2.4"/><path d="M442 56L446.5 62.5L449.5 57Z" fill="#3a3a3a"/><path d="M487 60Q484.5 54 479.5 54.5Q476 55 474.5 58.5" fill="none" stroke="#c8c8c8" stroke-width="2.4"/><path d="M489.5 56L485 62.5L482 57Z" fill="#c8c8c8"/><rect x="499" y="48" width="1" height="19" fill="#c8c8c8"/><rect x="500" y="48" width="1" height="19" fill="#fafafa"/><circle cx="514" cy="56.9" r="7.9" fill="#e0203c"/><rect x="508.7" y="55.4" width="10.6" height="3" fill="#fff"/><circle cx="541.3" cy="52.5" r="3.2" fill="#c8c8c8"/><circle cx="541.3" cy="61" r="3.2" fill="#969696"/><rect x="559" y="48" width="1" height="19" fill="#c8c8c8"/><rect x="560" y="48" width="1" height="19" fill="#fafafa"/><rect x="565" y="48" width="1" height="19" fill="#c8c8c8"/><rect x="566" y="48" width="1" height="19" fill="#fafafa"/><circle cx="583.8" cy="56.9" r="8" fill="#383838"/><path d="M580.8 54.6Q580.8 51.4 584 51.4Q587 51.4 587 54.2Q587 55.8 585.2 56.8Q584 57.5 584 59" fill="none" stroke="#fff" stroke-width="2.2"/><rect x="582.8" y="60.3" width="2.4" height="2.4" fill="#fff"/><rect x="601" y="43" width="1" height="28" fill="#b4b4b4"/><rect x="602" y="43" width="1" height="28" fill="#fcfcfc"/><rect x="604" y="45" width="2" height="2" fill="#a0a0a0"/><rect x="605" y="46" width="1" height="1" fill="#fff"/><rect x="604" y="49" width="2" height="2" fill="#a0a0a0"/><rect x="605" y="50" width="1" height="1" fill="#fff"/><rect x="604" y="53" width="2" height="2" fill="#a0a0a0"/><rect x="605" y="54" width="1" height="1" fill="#fff"/><rect x="604" y="57" width="2" height="2" fill="#a0a0a0"/><rect x="605" y="58" width="1" height="1" fill="#fff"/><rect x="604" y="61" width="2" height="2" fill="#a0a0a0"/><rect x="605" y="62" width="1" height="1" fill="#fff"/><rect x="604" y="65" width="2" height="2" fill="#a0a0a0"/><rect x="605" y="66" width="1" height="1" fill="#fff"/><rect x="604" y="69" width="2" height="2" fill="#a0a0a0"/><rect x="605" y="70" width="1" height="1" fill="#fff"/><rect x="620.5" y="46.5" width="54" height="22" rx="2" fill="url(#btng)" stroke="#3c3c3c" stroke-width="1"/><rect x="695.5" y="46.5" width="54" height="22" rx="2" fill="url(#btng)" stroke="#3c3c3c" stroke-width="1"/><rect x="770.5" y="46.5" width="54" height="22" rx="2" fill="url(#btng)" stroke="#3c3c3c" stroke-width="1"/><rect x="838.5" y="46.5" width="67" height="22" rx="2" fill="#eeeeee" stroke="#c4c4c4" stroke-width="1"/><rect x="913.5" y="46.5" width="67" height="22" rx="2" fill="#eeeeee" stroke="#c4c4c4" stroke-width="1"/><text x="627.5" y="58.3" font-family="Liberation Sans" font-size="9.5" fill="#e0203c" textLength="27" lengthAdjust="spacingAndGlyphs">design</text><text x="650" y="65.5" font-family="Liberation Sans" font-size="9.5" fill="#202020" textLength="14.5" lengthAdjust="spacingAndGlyphs">link</text><path d="M643.4 49.2L644.7 50.5L643.4 51.8L642.1 50.5Z" fill="none" stroke="#e0203c" stroke-width="0.9"/><path d="M635.6 58.3L637.3 60L639 58.3" fill="none" stroke="#e0203c" stroke-width="1"/><rect x="652.4" y="60.5" width="1.2" height="5.5" fill="#e0203c"/><path d="M653 58.3L654 59.3L653 60.3L652 59.3Z" fill="#e0203c"/><g fill="#fff" stroke="#e0103a" stroke-width="1.2"><rect x="702.6" y="57" width="2.2" height="11.5"/><rect x="706.3" y="53" width="2.2" height="15.5"/><rect x="710.5" y="57" width="2.2" height="11.5"/><rect x="699.6" y="54.6" width="3.9" height="3.8" rx="0.8"/><rect x="705.5" y="50.6" width="3.9" height="3.8" rx="0.8"/><rect x="711.6" y="54.6" width="3.9" height="3.8" rx="0.8"/></g><g fill="#e0103a"><rect x="701" y="56" width="1" height="1"/><rect x="707" y="52" width="1" height="1"/><rect x="713" y="56" width="1" height="1"/></g><text x="721" y="58" font-family="Liberation Mono" font-size="7" font-weight="bold" fill="#202020" textLength="14" lengthAdjust="spacingAndGlyphs">PCB</text><text x="721" y="65" font-family="Liberation Mono" font-size="7" font-weight="bold" fill="#202020" textLength="23" lengthAdjust="spacingAndGlyphs">QUOTE</text><path d="M775.6 54.6L779.6 50.4H789.6V59.6L785.3 64.4H775.6Z" fill="#fff" stroke="#e0103a" stroke-width="1.3" stroke-linejoin="round"/><path d="M777.5 63L780.5 59.5H787.5M780.5 52V59.5" stroke="#d8c8cc" stroke-width="0.8" fill="none"/><rect x="781" y="52.1" width="7" height="6.4" fill="#e0103a"/><path d="M782.5 54H784.5M782.5 55.5V57M784 55.5V57M786.2 53.5V57" stroke="#fff" stroke-width="0.8"/><text x="795.8" y="58" font-family="Liberation Mono" font-size="7" font-weight="bold" fill="#202020" textLength="11" lengthAdjust="spacingAndGlyphs">IDF</text><text x="795.8" y="65" font-family="Liberation Mono" font-size="7" font-weight="bold" fill="#202020" textLength="20.5" lengthAdjust="spacingAndGlyphs">TO 3D</text><path d="M848.7 51H853.5L859 63.8H855.3Z M846.2 61.2H852.5L847.7 64Z" fill="#3a3a3a"/><path d="M849 51.5L845.6 60" stroke="#3a3a3a" stroke-width="1.6"/><path d="M923.7 51H928.5L934 63.8H930.3Z M921.2 61.2H927.5L922.7 64Z" fill="#3a3a3a"/><path d="M924 51.5L920.6 60" stroke="#3a3a3a" stroke-width="1.6"/><text x="865" y="62.3" font-family="Liberation Sans" font-size="12.8" font-weight="bold" fill="#454545" textLength="32" lengthAdjust="spacingAndGlyphs">MAKE</text><text x="940.5" y="62.3" font-family="Liberation Sans" font-size="12.8" font-weight="bold" fill="#454545" textLength="32.5" lengthAdjust="spacingAndGlyphs">MCAD</text><rect x="3" y="76" width="2" height="2" fill="#a0a0a0"/><rect x="4" y="77" width="1" height="1" fill="#fff"/><rect x="3" y="80" width="2" height="2" fill="#a0a0a0"/><rect x="4" y="81" width="1" height="1" fill="#fff"/><rect x="3" y="84" width="2" height="2" fill="#a0a0a0"/><rect x="4" y="85" width="1" height="1" fill="#fff"/><rect x="3" y="88" width="2" height="2" fill="#a0a0a0"/><rect x="4" y="89" width="1" height="1" fill="#fff"/><rect x="3" y="92" width="2" height="2" fill="#a0a0a0"/><rect x="4" y="93" width="1" height="1" fill="#fff"/><rect x="17.5" y="76.5" width="15" height="15" fill="#fff" stroke="#3c3c3c" stroke-width="1.6"/><path d="M22.5 76.5V91.5M27.5 76.5V91.5M17.5 81.5H32.5M17.5 86.5H32.5" stroke="#3c3c3c" stroke-width="1.6"/><path d="M29 85H38L33.5 90Z" fill="#000"/><rect x="43" y="77" width="1" height="16" fill="#c8c8c8"/><rect x="44" y="77" width="1" height="16" fill="#fafafa"/><rect x="127" y="77" width="1" height="16" fill="#c8c8c8"/><rect x="128" y="77" width="1" height="16" fill="#fafafa"/><rect x="131.5" y="75.5" width="22" height="19" rx="3" fill="url(#btng2)" stroke="#505050" stroke-width="1"/><text x="136.5" y="86.5" font-family="Liberation Sans" font-size="7.5" fill="#606060">Abc</text><rect x="137" y="89" width="12" height="1.5" fill="#a0a0a0"/><rect x="158.5" y="80" width="12" height="1.2" fill="#a0a0a0"/><text transform="translate(171 83) rotate(180)" x="0" y="0" font-family="Liberation Sans" font-size="7.5" fill="#606060">Abc</text><rect x="179" y="77" width="1" height="16" fill="#c8c8c8"/><rect x="180" y="77" width="1" height="16" fill="#fafafa"/><rect x="183.5" y="75.5" width="22" height="19" rx="3" fill="url(#btng2)" stroke="#505050" stroke-width="1"/><rect x="187" y="78" width="7" height="6.5" fill="#b0acac"/><rect x="196" y="78" width="7" height="6.5" fill="#383838"/><rect x="187" y="87" width="7" height="6" fill="#b0acac"/><rect x="196" y="87" width="7" height="6" fill="#383838"/><rect x="209" y="77" width="7" height="7" fill="#383838"/><rect x="218" y="77" width="7" height="7" fill="#b0acac"/><rect x="209" y="86" width="7" height="6.5" fill="#383838"/><rect x="218" y="86" width="7" height="6.5" fill="#b0acac"/><rect x="4" y="102" width="2" height="2" fill="#a0a0a0"/><rect x="5" y="103" width="1" height="1" fill="#fff"/><rect x="8" y="102" width="2" height="2" fill="#a0a0a0"/><rect x="9" y="103" width="1" height="1" fill="#fff"/><rect x="12" y="102" width="2" height="2" fill="#a0a0a0"/><rect x="13" y="103" width="1" height="1" fill="#fff"/><rect x="16" y="102" width="2" height="2" fill="#a0a0a0"/><rect x="17" y="103" width="1" height="1" fill="#fff"/><rect x="20" y="102" width="2" height="2" fill="#a0a0a0"/><rect x="21" y="103" width="1" height="1" fill="#fff"/><rect x="24" y="102" width="2" height="2" fill="#a0a0a0"/><rect x="25" y="103" width="1" height="1" fill="#fff"/><rect x="28" y="102" width="2" height="2" fill="#a0a0a0"/><rect x="29" y="103" width="1" height="1" fill="#fff"/><rect x="32" y="102" width="2" height="2" fill="#a0a0a0"/><rect x="33" y="103" width="1" height="1" fill="#fff"/><rect x="36" y="102" width="2" height="2" fill="#a0a0a0"/><rect x="37" y="103" width="1" height="1" fill="#fff"/><rect x="40" y="102" width="2" height="2" fill="#a0a0a0"/><rect x="41" y="103" width="1" height="1" fill="#fff"/><rect x="44" y="102" width="2" height="2" fill="#a0a0a0"/><rect x="45" y="103" width="1" height="1" fill="#fff"/><rect x="48" y="102" width="2" height="2" fill="#a0a0a0"/><rect x="49" y="103" width="1" height="1" fill="#fff"/><rect x="52" y="102" width="2" height="2" fill="#a0a0a0"/><rect x="53" y="103" width="1" height="1" fill="#fff"/><circle cx="13" cy="118.8" r="8" fill="#3a3a3a"/><circle cx="13" cy="114.3" r="1.4" fill="#fff"/><path d="M11.3 117H14V122.5H15.2V124H10.8V122.5H12V118.4H11.3Z" fill="#fff"/><path d="M32.5 118.8Q40 110.5 47.5 118.8Q40 127 32.5 118.8Z" fill="#3a3a3a"/><circle cx="40" cy="118.8" r="2.9" fill="#fff"/><circle cx="40" cy="118.8" r="1.3" fill="#3a3a3a"/><rect x="17" y="140" width="8" height="8" fill="#1e9e50"/><rect x="13" y="136" width="8" height="8" fill="#e0204c" stroke="#fff" stroke-width="0.8"/><rect x="9" y="132" width="8" height="7.6" fill="#2c70c0" stroke="#fff" stroke-width="0.8"/><path d="M21 140.8H30L25.5 146.0Z" fill="#000"/><path d="M40.5 134V148M37 145H51" stroke="#909090" stroke-width="2"/><path d="M43 139.6H48.6M45.8 136.8V142.4" stroke="#3a3a3a" stroke-width="1.6"/><rect x="6.5" y="161.5" width="7.5" height="7" fill="none" stroke="#303030" stroke-width="1" stroke-dasharray="1.2 1"/><path d="M14 167.5L14.2 175.5L16 173.8L17.8 177L19.2 176.3L17.5 173H20Z" fill="#111"/><rect x="29.5" y="159.5" width="22" height="19" rx="3" fill="url(#btng2)" stroke="#505050" stroke-width="1"/><path d="M40.6 163L38.2 165.8H43Z M40.6 176.5L38.2 173.8H43Z M33.5 169.8L36.3 167.4V172.2Z M47.7 169.8L44.9 167.4V172.2Z" fill="#3a3a3a"/><path d="M40.6 165V174.5M35.5 169.8H45.7" stroke="#3a3a3a" stroke-width="0.9" stroke-dasharray="1 1.2"/><path d="M5.6 194.6L11.2 187V194.6Z M20.9 194.6L14.9 187V194.6Z" fill="#3a3a3a"/><rect x="12.3" y="184" width="1.6" height="14" fill="#a8a8a8"/><path d="M34.5 188.5A6 6 0 1 1 37 196.3" fill="none" stroke="#3a3a3a" stroke-width="2"/><path d="M32 191.5L34.2 186L37.6 190.4Z" fill="#3a3a3a"/><path d="M10 206H16L19 209V217.5H10Z" fill="#fafafa" stroke="#555" stroke-width="1"/><path d="M7.5 208.5H13.5L16.5 211.5V220.5H7.5Z" fill="#fafafa" stroke="#555" stroke-width="1"/><path d="M9.5 214H14.5M9.5 216H14.5M9.5 218H14.5" stroke="#999" stroke-width="0.9"/><rect x="33" y="205.5" width="10" height="12.5" rx="1" fill="#3a3a3a"/><rect x="35" y="206.8" width="6" height="1.2" fill="#fff"/><path d="M38.5 209.5H43.5L46.5 212.5V220.5H38.5Z" fill="#fafafa" stroke="#555" stroke-width="1"/><path d="M40.5 215H44.5M40.5 217H44.5" stroke="#999" stroke-width="0.9"/><rect x="10" y="227" width="6" height="2" rx="1" fill="#3a3a3a"/><rect x="6" y="228.8" width="14" height="3" rx="1" fill="#3a3a3a"/><path d="M7.3 232.5H18.7L17.8 242.7H8.2Z" fill="#3a3a3a"/><path d="M10.3 234.5V240.5M13 234.5V240.5M15.7 234.5V240.5" stroke="#fff" stroke-width="1.1"/><path d="M34 240.5L41.5 233" stroke="#3a3a3a" stroke-width="2.6" stroke-linecap="round"/><path d="M41.5 233A4.6 4.6 0 0 1 47.4 228.4L44.5 231.3L45.4 233.4L47.6 234.2L50.3 231.6A4.6 4.6 0 0 1 44 237Z" fill="#3a3a3a"/><rect x="5" y="249" width="10.7" height="10.5" fill="#d0253a"/><rect x="10.2" y="253" width="10.8" height="8.3" fill="#3a3a3a"/><rect x="10.2" y="261.3" width="10.8" height="3.5" fill="#1e8a2e"/><path d="M12.8 257.2H18.4M15.6 254.5V260" stroke="#fff" stroke-width="1.8"/><path d="M32 252H37.5Q43.4 253 43.4 256Q43.4 262 37.5 263.5H32M37.5 248.5V263.5" fill="none" stroke="#c0c0c0" stroke-width="1"/><path d="M32 253.5H37M32 261H37" stroke="#909090" stroke-width="1.2"/><rect x="37.3" y="252" width="10.9" height="7" fill="#3a3a3a"/><path d="M40 255.5H45.5M42.7 253V258" stroke="#fff" stroke-width="1.6"/><path d="M43.4 256.5H53.0L48.199999999999996 262.0Z" fill="#000"/><path d="M11 272.5Q6 274.5 6 279Q6 283.5 11 285.5" fill="none" stroke="#3a3a3a" stroke-width="1.6"/><path d="M12.5 271.5L9 271L10.5 274.5Z M12.5 286.5L9 287L10.5 283.5Z" fill="#3a3a3a"/><path d="M14.5 274H18.5M14.5 279H18.5M14.5 284H18.5" stroke="#505050" stroke-width="1.4"/><rect x="19" y="271" width="2" height="16" fill="#a8a8a8"/><path d="M34.5 277.5Q35 271.5 40 271.5Q44.5 271.5 45.5 276" fill="none" stroke="#3a3a3a" stroke-width="1.8"/><path d="M43 275.5L47.7 275L45.6 278.6Z" fill="#3a3a3a"/><rect x="33" y="278.8" width="6" height="5.4" fill="#3a3a3a"/><circle cx="44" cy="281.8" r="3" fill="#a0a0a0"/><path d="M44 279.4H53L48.5 284.2Z" fill="#000"/><path d="M9.3 298.5V297Q9.3 293.8 13 293.8Q16.8 293.8 16.8 297V298.5" fill="none" stroke="#3a3a3a" stroke-width="2.2"/><rect x="7" y="298" width="12.3" height="10.3" rx="1.5" fill="#3a3a3a"/><path d="M13 300.8A1.3 1.3 0 1 1 13.01 300.8Z M12.3 302.5H13.7V306H12.3Z" fill="#fff"/><text x="6.6" y="320.8" font-family="Liberation Sans" font-size="7" fill="#3a3a3a">R2</text><rect x="7.6" y="322.5" width="10" height="1.3" fill="#3a3a3a"/><text x="6.6" y="330.8" font-family="Liberation Sans" font-size="7" fill="#a0a0a0">10k</text><text x="33.8" y="320.8" font-family="Liberation Sans" font-size="7" fill="#a8a8a8">R2</text><rect x="35" y="322.5" width="9.4" height="1.3" fill="#3a3a3a"/><text x="33.8" y="330.8" font-family="Liberation Sans" font-size="7" fill="#111">10k</text><path d="M44.4 323H53.4L48.9 327.6Z" fill="#000"/><path d="M5.8 339H9.4M7.6 337.2V340.8M5.8 349.8H9.4M7.6 348V351.6" stroke="#3a3a3a" stroke-width="1.4"/><rect x="10.7" y="339.8" width="10" height="8.4" fill="#b0acac"/><rect x="32" y="336.8" width="15.4" height="15.2" fill="#a8a6a6"/><path d="M36.5 352V347Q36.5 340.8 42.5 340.8H47.4" fill="none" stroke="#222" stroke-width="1.8"/><path d="M37.5 352V347Q37.5 341.8 42.5 341.8H47.4V352Z" fill="#f0f0f0"/><path d="M8 374.3L12 363H20.6V374.3Z" fill="#a8a6a6"/><path d="M7.8 374.5L11.8 363L20.6 361.5" fill="none" stroke="#2a2a2a" stroke-width="1.8"/><path d="M33.4 364.3H37.5M42 364.3H46.7" stroke="#a8a8a8" stroke-width="1.2"/><path d="M37 369.7H43M40 366.7V372.7" stroke="#3a3a3a" stroke-width="1.7"/><path d="M6 395.5V389Q6 387 7.5 387Q9 387 9 389V392.5Q9 395.5 11 395.5Q13 395.5 13 392.5V384Q13 381.5 14.5 381.5Q16 381.5 16 384V392.5Q16 395.5 18 395.5Q20 395.5 20 392.5V389" fill="none" stroke="#3a3a3a" stroke-width="1.6"/><path d="M32 383.5H36.7M32 389H36.7M32 394.5H36.7M43.6 383.5H48.2M43.6 389H48.2M43.6 394.5H48.2" stroke="#3a3a3a" stroke-width="1.6"/><path d="M39.5 380L42.8 397" stroke="#909090" stroke-width="1.3"/><path d="M7 405.6H13.5L18.5 416" fill="none" stroke="#2a74c8" stroke-width="1.6"/><circle cx="6.9" cy="405.6" r="2.4" fill="#3cb43c"/><circle cx="18.5" cy="416.3" r="2.4" fill="#3cb43c"/><path d="M34 405.6H40.5L46 416" fill="none" stroke="#2a74c8" stroke-width="1.6"/><rect x="38" y="407" width="6.5" height="6" fill="#f0f0f0"/><path d="M39.3 408L43.3 412M43.3 408L39.3 412" stroke="#e0203c" stroke-width="1.5"/><circle cx="34" cy="405.6" r="2.4" fill="#3cb43c"/><circle cx="46" cy="416.3" r="2.4" fill="#3cb43c"/><rect x="5.5" y="445" width="11" height="2" fill="#222"/><path d="M16.8 442L19.8 433" stroke="#a0a0a0" stroke-width="2.6" stroke-linecap="round"/><text x="34.5" y="445.3" font-family="Liberation Serif" font-size="16.5" fill="#111">T</text><circle cx="12.8" cy="460.9" r="6.3" fill="none" stroke="#3a3a3a" stroke-width="1.9"/><path d="M33 462.5Q39.5 455 46 462.5" fill="none" stroke="#3a3a3a" stroke-width="2"/><rect x="7" y="475.6" width="12" height="15" fill="#3a3a3a"/><path d="M34.5 490V481L39.5 475.7H45.5V490Z" fill="none" stroke="#3a3a3a" stroke-width="1.3"/><ellipse cx="12.8" cy="510" rx="7.3" ry="2.7" fill="#1e9e3a"/><rect x="5.5" y="505" width="14.6" height="5" fill="#808080"/><ellipse cx="12.8" cy="505.5" rx="7.3" ry="2.7" fill="#909090"/><rect x="5.5" y="500" width="14.6" height="3" fill="#1e9e3a"/><ellipse cx="12.8" cy="500.2" rx="7.3" ry="2.7" fill="#2cb04a"/><ellipse cx="12.8" cy="503" rx="7.3" ry="1.2" fill="#1e9e3a"/><path d="M34 505.3H46" stroke="#f0c000" stroke-width="1.8"/><circle cx="34" cy="505.3" r="2.3" fill="#3cb43c"/><circle cx="46" cy="505.3" r="2.3" fill="#3cb43c"/><ellipse cx="12.8" cy="529.5" rx="7.3" ry="3" fill="#707070"/><rect x="5.5" y="524.5" width="14.6" height="5" fill="#8a8a8a"/><ellipse cx="12.8" cy="524.5" rx="7.3" ry="3" fill="#a0a0a0"/><ellipse cx="12.8" cy="524.5" rx="3.5" ry="1.2" fill="#f0f0f0"/><path d="M32 523.5H38M32 530H38M38.5 520Q44 521 44 526.5Q44 532 38.5 533.5V520" fill="none" stroke="#b0b0b0" stroke-width="1"/><rect x="38" y="522.4" width="10.2" height="8.4" fill="#2e2e2e"/><text x="38.8" y="529.8" font-family="Liberation Sans" font-weight="bold" font-size="7" fill="#fff">AT</text><path d="M6.5 545V554.5M19.8 545V554.5" stroke="#a0a0a0" stroke-width="1"/><path d="M10 549.3H16.5" stroke="#3a3a3a" stroke-width="2"/><path d="M7.5 549.3L11 546V552.6Z M18.8 549.3L15.3 546V552.6Z" fill="#3a3a3a"/><path d="M12.3 576.6L6.9 572.8M12.3 576.6L15.1 570.9M12.3 576.6L18.9 577.2M12.3 576.6L15.1 582.9M12.3 576.6L8.2 580.4" stroke="#3a3a3a" stroke-width="1"/><circle cx="6.9" cy="572.8" r="1.8" fill="#3a3a3a"/><circle cx="15.1" cy="570.9" r="1.8" fill="#3a3a3a"/><circle cx="18.9" cy="577.2" r="1.8" fill="#3a3a3a"/><circle cx="15.1" cy="582.9" r="1.8" fill="#3a3a3a"/><circle cx="8.2" cy="580.4" r="1.8" fill="#3a3a3a"/><circle cx="12.3" cy="576.6" r="1.9" fill="#3a3a3a"/><path d="M34 571.3H40.5L45.6 582.9" fill="none" stroke="#2a74c8" stroke-width="1.8"/><circle cx="34" cy="571.3" r="2.3" fill="#3cb43c"/><circle cx="45.6" cy="582.9" r="2.3" fill="#3cb43c"/><text x="32" y="585" font-family="Liberation Sans" font-size="10.5" fill="#3a3a3a" textLength="5.2" lengthAdjust="spacingAndGlyphs">A</text><rect x="5" y="591" width="15.8" height="15.8" rx="1" fill="#2e8a46"/><rect x="7" y="593" width="11.8" height="11.8" fill="none" stroke="#e8f4e8" stroke-width="0.9" stroke-dasharray="1 0.9"/><rect x="9.3" y="595.3" width="7.2" height="7.2" fill="#5aa86a"/><path d="M11.7 595.3V602.5M14.1 595.3V602.5M9.3 597.7H16.5M9.3 600.1H16.5" stroke="#2e8a46" stroke-width="0.6"/><text x="5" y="619.6" font-family="Liberation Sans" font-size="9" fill="#3a3a3a" textLength="13.2" lengthAdjust="spacingAndGlyphs">ERC</text><path d="M10.3 624L14 627.5L20.3 621" fill="none" stroke="#22962e" stroke-width="2.2"/><text x="32" y="619.6" font-family="Liberation Sans" font-size="9" fill="#3a3a3a" textLength="12.7" lengthAdjust="spacingAndGlyphs">DRC</text><path d="M37.2 624L40.8 627.5L47.2 621" fill="none" stroke="#22962e" stroke-width="2.2"/><path d="M13 635.3L21 650.5H5Z" fill="#f4c800" stroke="#f4c800" stroke-width="1.2" stroke-linejoin="round"/><rect x="12" y="639.5" width="2" height="6.5" fill="#222"/><rect x="12" y="647" width="2" height="1.8" fill="#222"/></svg></body></html>
